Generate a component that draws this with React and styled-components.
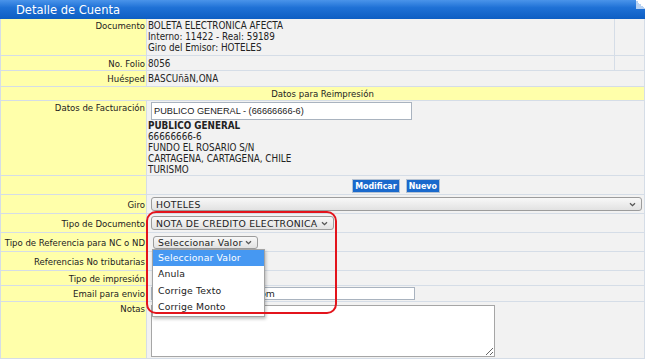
import styled, { createGlobalStyle } from "styled-components";

const GlobalStyle = createGlobalStyle`
  html, body { margin: 0; background: #fff; }
  body {
    font-family: "DejaVu Sans Condensed", "DejaVu Sans", sans-serif;
    color: #222;
  }
`;

const Window = styled.div`
  position: relative;
  width: 645px;
`;

const TitleBar = styled.div`
  position: relative;
  height: 19px;
  padding-left: 16px;
  background: linear-gradient(#4a94ea 0%, #1f71d6 40%, #0e5ec3 100%);
  color: #fff;
  font-size: 12.8px;
  line-height: 19px;
  &::after {
    content: "";
    position: absolute;
    top: 0;
    right: 0;
    width: 9px;
    height: 9px;
    background: linear-gradient(to bottom left, #fff 50%, #b8d2f2 50%);
  }
`;

const Sheet = styled.div`
  display: grid;
  grid-template-columns: 145px 1fr;
  grid-template-rows: 36px 14px 15px 13px 74px 18px 18px 18px 18px 18px 14px 15px 56px;
  gap: 1px;
  padding: 0 1px 1px;
  background: #d5dde7;
  font-size: 9.5px;
  line-height: 11px;
`;

const Label = styled.div`
  display: flex;
  justify-content: flex-end;
  align-items: ${(p) => (p.$top ? "flex-start" : "center")};
  padding: ${(p) => (p.$top ? "1px" : "0")} 1px 0 0;
  background: #ffffaa;
  white-space: nowrap;
`;

const Value = styled.div`
  display: flex;
  flex-direction: column;
  justify-content: ${(p) => (p.$top ? "flex-start" : "center")};
  padding: ${(p) => (p.$top ? "1px" : "0")} 0 0 1px;
  background: #f2f2f2;
  font-size: 9.8px;
  white-space: nowrap;
`;

const SplitValue = styled.div`
  display: flex;
  background: #f2f2f2;
  font-size: 9.8px;
`;

const SplitText = styled.div`
  flex: 1;
  display: flex;
  flex-direction: column;
  justify-content: ${(p) => (p.$top ? "flex-start" : "center")};
  padding: ${(p) => (p.$top ? "1px" : "0")} 0 0 1px;
`;

const Spare = styled.div`
  width: 29px;
  border-left: 1px solid #d5dde7;
`;

const SectionTitle = styled.div`
  grid-column: 1 / -1;
  display: flex;
  align-items: center;
  justify-content: center;
  background: #ffffaa;
`;

const TextBox = styled.input`
  box-sizing: border-box;
  width: ${(p) => p.$w}px;
  height: ${(p) => p.$h}px;
  margin: 0 0 0 3px;
  padding: 0 2px;
  border: 1px solid #a9b3bf;
  background: #fff;
  color: #222;
  font-family: ${(p) => (p.$plain ? '"Liberation Sans", Arial, sans-serif' : '"DejaVu Sans", sans-serif')};
  font-size: ${(p) => (p.$plain ? "9.2px" : "9.3px")};
  outline: none;
`;

const Address = styled.div`
  display: flex;
  flex-direction: column;
`;

const Strong = styled.b`
  font-weight: bold;
`;

const ButtonBar = styled.div`
  display: flex;
  justify-content: center;
  align-items: center;
  gap: 6px;
  padding-top: 1px;
`;

const Button = styled.button`
  height: 14px;
  padding: 0 2px;
  border: 1px solid #b5c2d2;
  background: #1a69cc;
  color: #fff;
  font-family: "DejaVu Sans Condensed", "DejaVu Sans", sans-serif;
  font-size: 8.8px;
  font-weight: bold;
  line-height: 12px;
`;

const SelectWrap = styled.div`
  position: relative;
  align-self: flex-start;
  margin-left: ${(p) => p.$ml}px;
`;

const Select = styled.div`
  box-sizing: border-box;
  display: flex;
  align-items: center;
  justify-content: space-between;
  width: ${(p) => p.$w}px;
  height: ${(p) => p.$h || 14}px;
  padding: 0 5px 0 4px;
  border: 1px solid #9c9c9c;
  border-radius: 3px;
  background: linear-gradient(#f8f8f8, #e2e2e2);
  font-family: "DejaVu Sans", sans-serif;
  font-size: 9.3px;
  letter-spacing: 0.25px;
  color: #222;
`;

const Menu = styled.ul`
  position: absolute;
  top: 100%;
  left: -1px;
  z-index: 5;
  box-sizing: border-box;
  width: 113px;
  margin: 0;
  padding: 0;
  list-style: none;
  background: #fff;
  border: 1px solid #a3a3a3;
  box-shadow: 1px 2px 3px rgba(0, 0, 0, 0.25);
`;

const Option = styled.li`
  height: 16.5px;
  line-height: 16.5px;
  padding-left: 5px;
  font-family: "DejaVu Sans", sans-serif;
  font-size: 9.3px;
  letter-spacing: 0.15px;
  background: ${(p) => (p.$active ? "#4698f2" : "transparent")};
  color: ${(p) => (p.$active ? "#fff" : "#222")};
`;

const Notes = styled.textarea`
  box-sizing: border-box;
  width: 344px;
  height: 52px;
  margin: 2px 0 0 3px;
  border: 1px solid #a6a6a6;
  background: #fff;
  resize: both;
  outline: none;
`;

const Highlight = styled.div`
  position: absolute;
  left: 146px;
  top: 211px;
  width: 191px;
  height: 103px;
  box-sizing: border-box;
  border: 2px solid #e3141c;
  border-radius: 10px;
  z-index: 10;
  pointer-events: none;
`;

function Chevron() {
  return (
    <svg width="7" height="5" viewBox="0 0 7 5">
      <path d="M1 1.2 L3.5 3.7 L6 1.2" fill="none" stroke="#555" strokeWidth="1.3" />
    </svg>
  );
}

const refOptions = ["Seleccionar Valor", "Anula", "Corrige Texto", "Corrige Monto"];

export default function App() {
  return (
    <>
      <GlobalStyle />
      <Window>
        <TitleBar>Detalle de Cuenta</TitleBar>
        <Sheet>
          <Label $top>Documento</Label>
          <SplitValue>
            <SplitText $top>
              <span>BOLETA ELECTRONICA AFECTA</span>
              <span>Interno: 11422 - Real: 59189</span>
              <span>Giro del Emisor: HOTELES</span>
            </SplitText>
            <Spare />
          </SplitValue>

          <Label>No. Folio</Label>
          <SplitValue>
            <SplitText>8056</SplitText>
            <Spare />
          </SplitValue>

          <Label>Huésped</Label>
          <Value>BASCUñãN,ONA</Value>

          <SectionTitle>Datos para Reimpresión</SectionTitle>

          <Label $top>Datos de Facturación</Label>
          <Value $top>
            <TextBox $w={261} $h={18} $plain readOnly value="PUBLICO GENERAL - (66666666-6)" />
            <Address>
              <Strong>PUBLICO GENERAL</Strong>
              <span>66666666-6</span>
              <span>FUNDO EL ROSARIO S/N</span>
              <span>CARTAGENA, CARTAGENA, CHILE</span>
              <span>TURISMO</span>
            </Address>
          </Value>

          <Label />
          <Value>
            <ButtonBar>
              <Button>Modificar</Button>
              <Button>Nuevo</Button>
            </ButtonBar>
          </Value>

          <Label>Giro</Label>
          <Value>
            <SelectWrap $ml={3}>
              <Select $w={491}>
                HOTELES
                <Chevron />
              </Select>
            </SelectWrap>
          </Value>

          <Label>Tipo de Documento</Label>
          <Value>
            <SelectWrap $ml={3}>
              <Select $w={183}>
                NOTA DE CREDITO ELECTRONICA
                <Chevron />
              </Select>
            </SelectWrap>
          </Value>

          <Label>Tipo de Referencia para NC o ND</Label>
          <Value>
            <SelectWrap $ml={5}>
              <Select $w={105} $h={13}>
                Seleccionar Valor
                <Chevron />
              </Select>
              <Menu>
                {refOptions.map((o, i) => (
                  <Option key={o} $active={i === 0}>
                    {o}
                  </Option>
                ))}
              </Menu>
            </SelectWrap>
          </Value>

          <Label>Referencias No tributarias</Label>
          <Value />

          <Label>Tipo de impresión</Label>
          <Value />

          <Label>Email para envio</Label>
          <Value>
            <TextBox $w={264} $h={13} readOnly value="recepcion@el-rosario.com" />
          </Value>

          <Label $top>Notas</Label>
          <Value $top>
            <Notes />
          </Value>
        </Sheet>
        <Highlight />
      </Window>
    </>
  );
}
